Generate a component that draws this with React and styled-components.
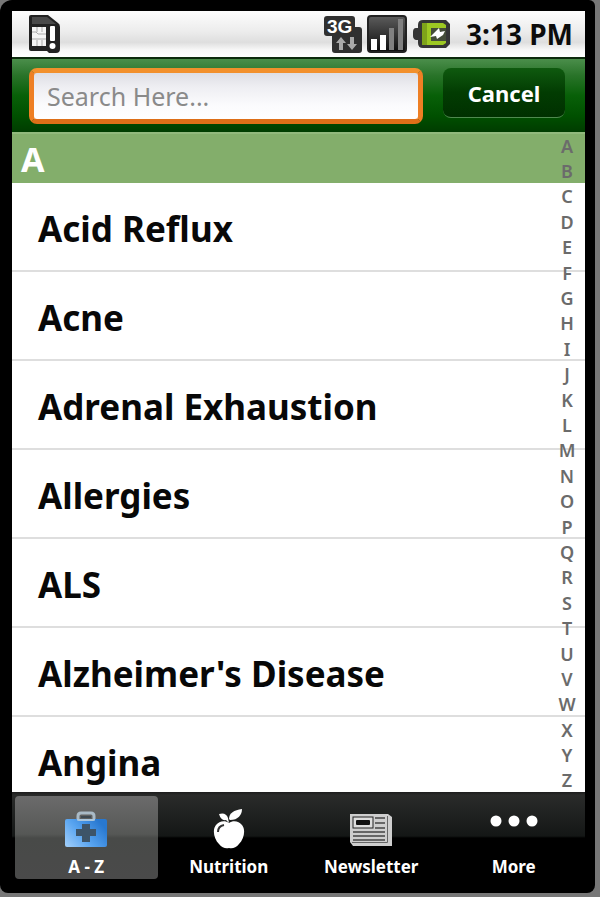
import React, { useState } from 'react';
import styled, { createGlobalStyle, css } from 'styled-components';

const conditions = [
  'Acid Reflux',
  'Acne',
  'Adrenal Exhaustion',
  'Allergies',
  'ALS',
  "Alzheimer's Disease",
  'Angina',
];

const letters = 'ABCDEFGHIJKLMNOPQRSTUVWXYZ'.split('');

const GlobalStyle = createGlobalStyle`
  * {
    box-sizing: border-box;
  }
  body {
    margin: 0;
    background: #fff;
    font-family: "Noto Sans", "Open Sans", sans-serif;
  }
`;

// Grey backing plate that shows at the right and bottom of the phone
const Backdrop = styled.div`
  height: 100vh;
  padding: 0 5px 7px 0;
  background: linear-gradient(#777, #777) top / 100% calc(100% - 3px) no-repeat #fff;
`;

const Phone = styled.div`
  height: 100%;
  padding: 11px 10px 0 12px;
  background: #000;
  border-radius: 12px 6px 8px 8px;
`;

const Screen = styled.div`
  height: 100%;
  display: flex;
  flex-direction: column;
`;

// Status bar
const StatusBar = styled.header`
  height: 46px;
  flex: none;
  display: flex;
  align-items: center;
  justify-content: space-between;
  padding: 0 12px 0 16px;
  background: linear-gradient(#fdfdfd 0%, #ececec 45%, #dedede 68%, #f8f8f8 85%, #fff 100%);
`;

const StatusIcons = styled.div`
  display: flex;
  align-items: center;
  gap: 5px;
`;

const Clock = styled.time`
  margin-left: 10px;
  font-size: 28px;
  line-height: 46px;
  font-weight: 700;
  color: #0c0c0c;
  white-space: nowrap;
`;

// Search
const SearchBar = styled.form`
  height: 75px;
  flex: none;
  display: flex;
  align-items: flex-start;
  gap: 20px;
  padding: 9px 20px 0 17px;
  border-top: 2px solid #0c2a0c;
  background: linear-gradient(#4b8e4b 0%, #2a742a 22%, #086008 50%, #005000 78%, #003c00 100%);
`;

const SearchInput = styled.input`
  flex: 1;
  min-width: 0;
  height: 56px;
  padding: 0 13px;
  border: 5px solid;
  border-color: #f2902c #ee7f24 #de6f18 #ee7f24;
  border-radius: 8px;
  outline: none;
  background: linear-gradient(#dedee4 0%, #eeeef2 30%, #fbfbfd 70%, #fff 100%);
  font-family: inherit;
  font-size: 25px;
  color: #222;

  &::placeholder {
    color: #8a8a8a;
    opacity: 1;
  }
`;

const CancelButton = styled.button`
  width: 122px;
  height: 50px;
  padding: 0;
  border: 0;
  border-bottom: 1px solid #4f8a4f;
  border-radius: 8px;
  background: linear-gradient(#0f5a0f 0%, #023c02 50%, #003000 100%);
  font-family: inherit;
  font-size: 22px;
  font-weight: 700;
  color: #fff;
`;

// List
const ListArea = styled.main`
  position: relative;
  flex: 1;
  min-height: 0;
  overflow: hidden;
  background: #fff;
`;

const SectionTitle = styled.h2`
  height: 51px;
  margin: 0;
  padding: 0 9px;
  border-top: 2px solid #91b97c;
  background: #83ae6b;
  font-size: 34px;
  line-height: 50px;
  font-weight: 700;
  color: #fff;
`;

const List = styled.ul`
  margin: 0;
  padding: 0;
  list-style: none;
`;

const Row = styled.li`
  height: 89px;
  padding: 0 26px;
  border-bottom: 2px solid #dedede;
  font-size: 35px;
  line-height: 91px;
  font-weight: 700;
  color: #080808;
  white-space: nowrap;
`;

const LetterIndex = styled.nav`
  position: absolute;
  top: 1px;
  right: 0;
  bottom: -1px;
  width: 36px;
  display: flex;
  flex-direction: column;
`;

const Letter = styled.a`
  flex: 1;
  min-height: 0;
  display: flex;
  align-items: center;
  justify-content: center;
  font-size: 18px;
  line-height: 24px;
  font-weight: 600;
  color: #6b6b6b;
  text-decoration: none;
`;

// Bottom tabs
const TabBar = styled.nav`
  height: 101px;
  flex: none;
  display: grid;
  grid-template-columns: repeat(4, 1fr);
  padding: 4px 0 14px 3px;
  background: linear-gradient(#1c1c1c 0, #2a2b2a 3px, #141716 44px, #000 46px);
`;

const Tab = styled.button`
  display: flex;
  flex-direction: column;
  align-items: center;
  justify-content: flex-end;
  gap: 6px;
  padding: 0;
  border: 0;
  border-radius: 4px;
  background: none;
  font-family: inherit;
  font-size: 17px;
  line-height: 24px;
  font-weight: 700;
  color: #fff;

  ${({ $active }) =>
    $active &&
    css`
      background: linear-gradient(#6b6b6b 0, #565856 38px, #484a48 42px, #4a4a4a 100%);
    `}
`;

const SimIcon = () => (
  <svg width="32" height="38" viewBox="0 0 32 38" aria-hidden="true">
    <path d="M3 0H20L30 8Q32 9 32 12V34Q32 38 28 38H21L19 36H3Q1 36 1 34V2Q1 0 3 0Z" fill="#222" />
    <path d="M4 2H19L28 9H4Z" fill="#4a4a4a" />
    <rect x="4" y="12" width="14" height="19" fill="#f4f4f4" />
    <path d="M4 17H8L10 19H18M4 24H18M9 12V17M14 12V17M9 25V31M14 25V31" stroke="#aaa" fill="none" />
    <rect x="22" y="11" width="5" height="15" rx="1" fill="#fff" />
    <circle cx="24.5" cy="31" r="3" fill="#fff" />
  </svg>
);

const DataText = styled.text`
  font-family: "Liberation Sans", sans-serif;
  font-size: 19px;
  font-weight: 700;
  fill: #fff;
`;

const DataIcon = () => (
  <svg width="38" height="38" viewBox="0 0 38 38">
    <path d="M3 1H28Q31 1 31 4V12H35Q38 12 38 15V35Q38 38 35 38H11Q8 38 8 35V21H3Q0 21 0 18V4Q0 1 3 1Z" fill="#303030" />
    <DataText x="3" y="18">3G</DataText>
    <path d="M17 22L22 28H19V35H15V28H12ZM26 22H30V29H33L28 35L23 29H26Z" fill="#aaa" />
  </svg>
);

const SignalIcon = () => (
  <svg width="40" height="38" viewBox="0 0 40 38" aria-hidden="true">
    <defs>
      <linearGradient id="signalBg" x2="0" y2="1">
        <stop offset="0" stopColor="#5c5c5c" />
        <stop offset="1" stopColor="#0c0c0c" />
      </linearGradient>
    </defs>
    <rect x="1" y="1" width="38" height="36" rx="3" fill="url(#signalBg)" stroke="#222" strokeWidth="2" />
    <rect x="4" y="24" width="6" height="11" fill="#fff" />
    <rect x="13" y="20" width="6" height="15" fill="#fff" />
    <rect x="22" y="13" width="5" height="22" fill="#808080" />
    <rect x="31" y="4" width="5" height="31" fill="#808080" />
  </svg>
);

const BatteryIcon = () => (
  <svg width="39" height="30" viewBox="0 0 39 30" aria-hidden="true">
    <path d="M11 1H34L38 5V25L34 29H11Q6 29 6 24V21H4Q1 20 1 17V13Q1 9 4 9H6V6Q6 1 11 1Z" fill="#353535" />
    <path d="M10 4H31L34 6V9H19V22H34V24L31 26H10Z" fill="#9dc822" />
    <path d="M10 4H15V26H10Z" fill="#7ea31a" />
    <rect x="19" y="9" width="15" height="13" fill="#444c38" />
    <path d="M18 18L27 9L28 13L33 12L31 16L25 20L24 17Z" fill="#fff" />
  </svg>
);

const KitIcon = () => (
  <svg width="44" height="38" viewBox="0 0 44 38" aria-hidden="true">
    <defs>
      <linearGradient id="kitBlue" x1="0" y1="1" x2="1" y2="0.4">
        <stop offset="0" stopColor="#a4d0fa" />
        <stop offset="0.5" stopColor="#58a4f0" />
        <stop offset="1" stopColor="#2878d0" />
      </linearGradient>
    </defs>
    <path d="M14 9V5Q14 2 17 2H27Q30 2 30 5V9" fill="none" stroke="#a9bac6" strokeWidth="3" />
    <path d="M17 6H27" stroke="#3f4a52" strokeWidth="2" />
    <rect x="1" y="8" width="42" height="28" rx="2" fill="url(#kitBlue)" />
    <path d="M13 8H31V9Q31 10 29 10H15Q13 10 13 9Z" fill="#a9c6de" />
    <path d="M18 13H26V18H32V25H26V31H18V25H12V18H18Z" fill="#3d5468" />
  </svg>
);

const AppleIcon = () => (
  <svg width="32" height="40" viewBox="0 0 32 40" aria-hidden="true">
    <path d="M16 14C12 11 6 12 3 16C-1 21 1 30 6 35C9 39 13 40 16 39C19 40 23 39 26 35C31 30 33 21 29 16C26 12 20 11 16 14Z" fill="#fff" />
    <path d="M16 10C16 4 21 1 29 0C29 6 25 11 17 11Z" fill="#fff" />
    <path d="M6 5Q13 3 15 9L16 14L13 11Q8 12 6 5Z" fill="#fff" />
    <path d="M5 23Q5 17 11 16" stroke="#333" strokeWidth="2" fill="none" />
  </svg>
);

const NewsIcon = () => (
  <svg width="44" height="38" viewBox="0 0 44 38" aria-hidden="true">
    <path d="M1 3H39L43 6V35H4L1 31Z" fill="#cecece" />
    <path d="M38.5 5V31.5H3" stroke="#666" fill="none" />
    <rect x="4" y="6" width="20" height="11" fill="#ddd" stroke="#222" />
    <rect x="7" y="9" width="14" height="5" rx="1" fill="#111" />
    <path d="M26 7H36M26 12H36M26 17H36M4 21H36M4 25H36M4 29H36" stroke="#444" strokeWidth="1.5" />
  </svg>
);

const DotsIcon = () => (
  <svg width="48" height="38" viewBox="0 0 48 38" aria-hidden="true">
    <circle cx="6" cy="10" r="5.5" fill="#fff" />
    <circle cx="24" cy="10" r="5.5" fill="#fff" />
    <circle cx="42" cy="10" r="5.5" fill="#fff" />
  </svg>
);

const tabs = [
  { label: 'A - Z', icon: <KitIcon /> },
  { label: 'Nutrition', icon: <AppleIcon /> },
  { label: 'Newsletter', icon: <NewsIcon /> },
  { label: 'More', icon: <DotsIcon /> },
];

const App = () => {
  const [activeTab, setActiveTab] = useState('A - Z');
  const [query, setQuery] = useState('');

  return (
    <Backdrop>
      <GlobalStyle />
      <Phone>
        <Screen>
          <StatusBar>
            <SimIcon />
            <StatusIcons>
              <DataIcon />
              <SignalIcon />
              <BatteryIcon />
              <Clock>3:13 PM</Clock>
            </StatusIcons>
          </StatusBar>

          <SearchBar onSubmit={(e) => e.preventDefault()}>
            <SearchInput
              type="text"
              aria-label="Search"
              placeholder="Search Here..."
              value={query}
              onChange={(e) => setQuery(e.target.value)}
            />
            <CancelButton type="button" onClick={() => setQuery('')}>
              Cancel
            </CancelButton>
          </SearchBar>

          <ListArea>
            <SectionTitle id="A">A</SectionTitle>
            <List>
              {conditions.map((name) => (
                <Row key={name}>{name}</Row>
              ))}
            </List>
            <LetterIndex>
              {letters.map((letter) => (
                <Letter key={letter} href={`#${letter}`}>
                  {letter}
                </Letter>
              ))}
            </LetterIndex>
          </ListArea>

          <TabBar>
            {tabs.map(({ label, icon }) => (
              <Tab
                key={label}
                type="button"
                $active={label === activeTab}
                onClick={() => setActiveTab(label)}
              >
                {icon}
                {label}
              </Tab>
            ))}
          </TabBar>
        </Screen>
      </Phone>
    </Backdrop>
  );
};

export default App;
